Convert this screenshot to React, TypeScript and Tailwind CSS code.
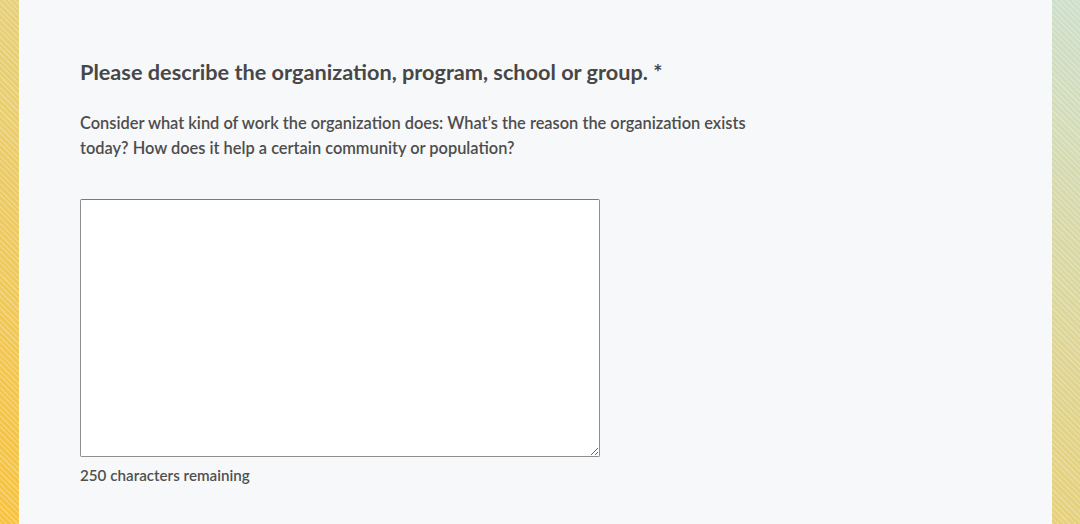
export default function App() {
  return (
    <div
      className="flex h-[524px] w-[1080px] overflow-hidden bg-[linear-gradient(to_top_right,#f7c23e,#e6d07a_50%,#cddfcc)]"
      style={{ fontFamily: "Lato, 'Noto Sans', sans-serif" }}
    >
      <div className="w-[19px] shrink-0 bg-[repeating-linear-gradient(45deg,rgba(255,255,255,0.22)_0px,rgba(255,255,255,0.22)_1.5px,transparent_1.5px,transparent_4px)]" />
      <main className="flex-1 border-l border-white/70 bg-[#f7f8fa] px-[60px] pt-[57px]">
        <h2 className="text-[21.7px] font-bold leading-[30px] text-[#474747]">
          Please describe the organization, program, school or group. *
        </h2>
        <p className="mt-[23px] w-[710px] text-[16.4px] font-semibold leading-[25px] text-[#4d4d4d]">
          Consider what kind of work the organization does: What’s the reason the organization exists today? How does it help a certain community or population?
        </p>
        <textarea className="mt-[39px] block h-[258px] w-[520px] rounded-[2px] border border-[#8f8f8f] border-t-[#7a7a7a] bg-white" />
        <div className="mt-[8px] text-[15.2px] font-semibold leading-[20px] text-[#505050]">250 characters remaining</div>
      </main>
      <div className="w-[28px] shrink-0 bg-[repeating-linear-gradient(45deg,rgba(255,255,255,0.22)_0px,rgba(255,255,255,0.22)_1.5px,transparent_1.5px,transparent_4px)]" />
    </div>
  );
}
